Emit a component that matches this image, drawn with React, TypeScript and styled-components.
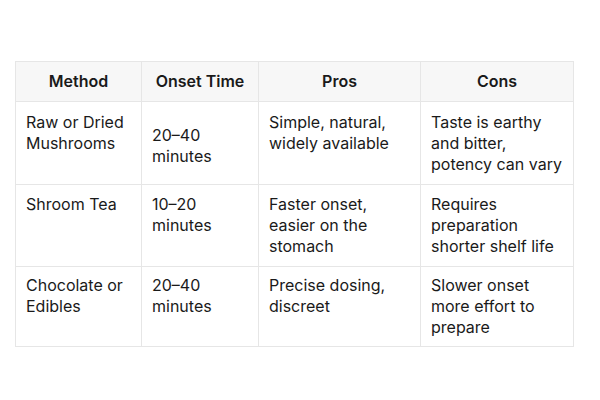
import React from "react";
import styled, { createGlobalStyle } from "styled-components";

const GlobalStyle = createGlobalStyle`
    html, body {
        margin: 0;
        padding: 0;
        background: #ffffff;
    }
    body {
        font-family: Inter, "Noto Sans", sans-serif;
        color: #1a1a1a;
    }
`;

const Page = styled.div`
    width: 600px;
    height: 400px;
    padding: 61px 0 0 15px;
    box-sizing: border-box;
`;

const Table = styled.table`
    border-collapse: collapse;
    table-layout: fixed;
    width: 558px;
    font-size: 16px;
    line-height: 21px;
`;

const HeadCell = styled.th`
    background: #f7f7f7;
    border: 1px solid #e6e6e6;
    height: 40px;
    padding: 0 10px;
    box-sizing: border-box;
    font-weight: 600;
    text-align: center;
    vertical-align: middle;
`;

const Row = styled.tr<{ $height: number }>`
    height: ${(p) => p.$height}px;
`;

const Cell = styled.td<{ $top: number }>`
    border: 1px solid #e6e6e6;
    padding: ${(p) => p.$top}px 10px 0 10px;
    vertical-align: top;
    text-align: left;
    font-weight: 400;
`;

const columns = [
    { title: "Method", width: 126 },
    { title: "Onset Time", width: 117 },
    { title: "Pros", width: 162 },
    { title: "Cons", width: 153 },
];

const rows = [
    {
        height: 83,
        top: 10,
        shift: 13,
        cells: [
            ["Raw or Dried", "Mushrooms"],
            ["20–40", "minutes"],
            ["Simple, natural,", "widely available"],
            ["Taste is earthy", "and bitter,", "potency can vary"],
        ],
    },
    {
        height: 82,
        top: 9,
        shift: 0,
        cells: [
            ["Shroom Tea"],
            ["10–20", "minutes"],
            ["Faster onset,", "easier on the", "stomach"],
            ["Requires", "preparation", "shorter shelf life"],
        ],
    },
    {
        height: 80,
        top: 8,
        shift: 0,
        cells: [
            ["Chocolate or", "Edibles"],
            ["20–40", "minutes"],
            ["Precise dosing,", "discreet"],
            ["Slower onset", "more effort to", "prepare"],
        ],
    },
];

export default function App() {
    return (
        <>
            <GlobalStyle />
            <Page>
                <Table>
                    <colgroup>
                        {columns.map((c) => (
                            <col key={c.title} style={{ width: c.width }} />
                        ))}
                    </colgroup>
                    <thead>
                        <tr>
                            {columns.map((c) => (
                                <HeadCell key={c.title}>{c.title}</HeadCell>
                            ))}
                        </tr>
                    </thead>
                    <tbody>
                        {rows.map((r, i) => (
                            <Row key={i} $height={r.height}>
                                {r.cells.map((lines, j) => (
                                    <Cell
                                        key={j}
                                        $top={r.top + (j === 1 ? r.shift : 0)}
                                    >
                                        {lines.map((l, k) => (
                                            <React.Fragment key={k}>
                                                {k > 0 && <br />}
                                                {l}
                                            </React.Fragment>
                                        ))}
                                    </Cell>
                                ))}
                            </Row>
                        ))}
                    </tbody>
                </Table>
            </Page>
        </>
    );
}
